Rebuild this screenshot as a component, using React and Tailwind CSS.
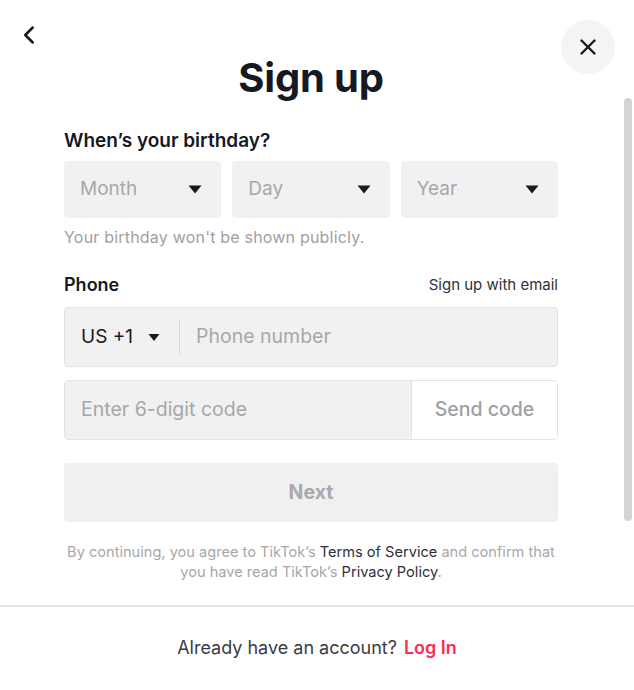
import { ChevronLeft, X } from "lucide-react";

function Caret({ className = "" }) {
  return (
    <svg width="14" height="9" viewBox="0 0 14 9" className={className}>
      <path d="M0.5 0.5h13L7 8.5z" fill="#161823" />
    </svg>
  );
}

function SelectBox({ label }) {
  return (
    <div className="flex h-[57px] flex-1 items-center justify-between rounded-[4px] bg-[#f1f1f2] pl-4 pr-[19px]">
      <span className="text-[19px] text-[#a7a7ab]">{label}</span>
      <Caret />
    </div>
  );
}

export default function App() {
  return (
    <div
      className="relative flex h-[690px] w-[634px] flex-col overflow-hidden bg-white text-[#161823]"
      style={{ fontFamily: "Inter, 'Liberation Sans', sans-serif" }}
    >
      <button className="absolute left-[14px] top-[20px] text-[#161823]">
        <ChevronLeft size={30} strokeWidth={2} />
      </button>
      <button className="absolute right-[19px] top-[20px] flex h-[54px] w-[54px] items-center justify-center rounded-full bg-[#f4f4f5]">
        <X size={26} strokeWidth={2.2} />
      </button>
      <div className="absolute right-[2px] top-[98px] h-[423px] w-[8px] rounded-full bg-[#d4d4d4]" />

      <div className="h-[605px] px-16 pt-[54px]">
        <div className="w-[494px]">
          <h1 className="text-center text-[40px] font-bold leading-[48px] tracking-[-0.2px]">Sign up</h1>

          <div className="mt-[27px] text-[19px] font-semibold leading-[24px]">When’s your birthday?</div>
          <div className="mt-2 flex gap-[11px]">
            <SelectBox label="Month" />
            <SelectBox label="Day" />
            <SelectBox label="Year" />
          </div>
          <div className="mt-[9px] text-[16px] leading-[20px] tracking-[0.2px] text-[#a0a0a4]">Your birthday won't be shown publicly.</div>

          <div className="mt-[26px] flex items-center justify-between leading-[24px]">
            <span className="text-[18px] font-semibold">Phone</span>
            <span className="text-[15px] text-[#2f3038]">Sign up with email</span>
          </div>

          <div className="mt-[10px] flex h-[60px] items-center rounded-[4px] border border-[#e3e3e4] bg-[#f1f1f2]">
            <div className="flex items-center pl-4">
              <span className="text-[19px]">US +1</span>
              <Caret className="ml-[14px] scale-[0.85]" />
            </div>
            <div className="ml-[18px] h-[34px] w-px bg-[#d5d5d8]" />
            <span className="ml-4 text-[19.5px] text-[#a7a7ab]">Phone number</span>
          </div>

          <div className="mt-[13px] flex h-[60px] overflow-hidden rounded-[4px] border border-[#e3e3e4]">
            <div className="flex flex-1 items-center bg-[#f1f1f2] pl-4">
              <span className="text-[19.5px] text-[#a7a7ab]">Enter 6-digit code</span>
            </div>
            <div className="flex w-[146px] items-center justify-center border-l border-[#e3e3e4] bg-white">
              <span className="text-[19.5px] font-medium text-[#a0a0a4]">Send code</span>
            </div>
          </div>

          <button className="mt-[23px] flex h-[59px] w-full items-center justify-center rounded-[4px] bg-[#f0f0f1] text-[19.5px] font-bold text-[#a9a9ac]">
            Next
          </button>

          <p className="mt-[20px] text-center text-[14.6px] leading-[20px] text-[#a7a7ab]">
            By continuing, you agree to TikTok’s <span className="text-[#2f3038]">Terms of Service</span> and confirm that
            <br />
            you have read TikTok’s <span className="text-[#2f3038]">Privacy Policy</span>.
          </p>
        </div>
      </div>

      <div className="flex flex-1 items-center justify-center border-t-2 border-[#e6e6e8] pb-[2px]">
        <span className="text-[18px] text-[#3a3b42]">Already have an account?</span>
        <span className="ml-[7px] text-[18px] font-semibold text-[#fe2c55]">Log In</span>
      </div>
    </div>
  );
}
